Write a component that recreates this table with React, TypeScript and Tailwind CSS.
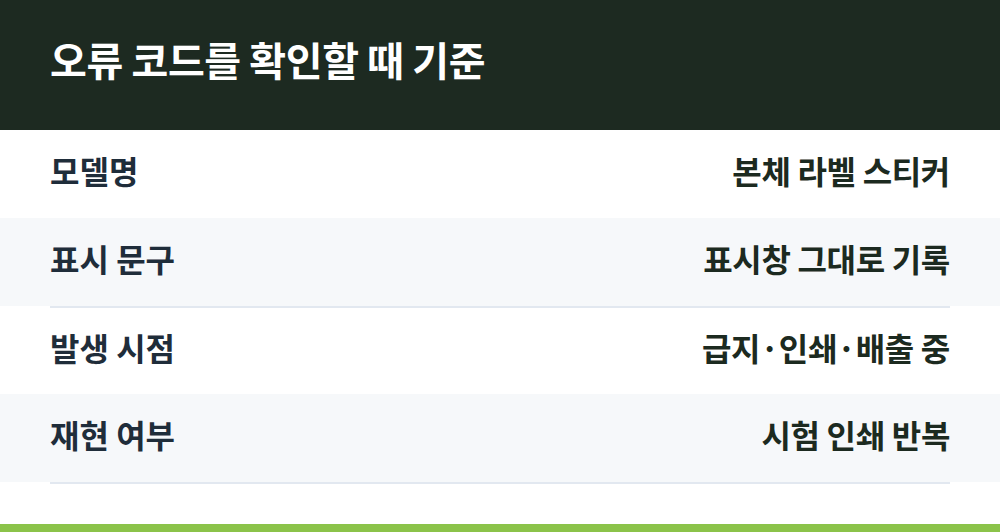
const ROWS = [
  { label: "모델명", value: "본체 라벨 스티커" },
  { label: "표시 문구", value: "표시창 그대로 기록" },
  { label: "발생 시점", value: "급지·인쇄·배출 중" },
  { label: "재현 여부", value: "시험 인쇄 반복" },
];

export default function App() {
  return (
    <div
      className="flex h-[532px] w-full flex-col bg-white"
      style={{ fontFamily: '"Noto Sans CJK KR", "Noto Sans", sans-serif' }}
    >
      {/* Header */}
      <header className="flex h-[130px] items-center bg-[#1d2a21] px-[50px] pb-[12px]">
        <h1 className="text-[40px] font-semibold leading-none tracking-[-0.01em] text-white">
          오류 코드를 확인할 때 기준
        </h1>
      </header>

      {/* 기준 목록 */}
      <div className="flex flex-col">
        {ROWS.map((row, i) => {
          const striped = i % 2 === 1;
          return (
            <div key={row.label}>
              <div
                className={`flex items-center justify-between px-[50px] pb-[8px] ${
                  striped ? "h-[88px] bg-[#f6f8fa]" : i === 0 ? "h-[88px]" : "h-[86px]"
                }`}
              >
                <span className="text-[32px] font-semibold leading-none text-[#1f2d3a]">
                  {row.label}
                </span>
                <span className="text-[32px] font-semibold leading-none tracking-[-0.01em] text-[#1c2a20]">
                  {row.value}
                </span>
              </div>
              {striped && <div className="mx-[50px] h-[2px] bg-[#e2e8f0]" />}
            </div>
          );
        })}
      </div>

      <div className="flex-1" />
      <div className="h-[8px] bg-[#8bc34a]" />
    </div>
  );
}
